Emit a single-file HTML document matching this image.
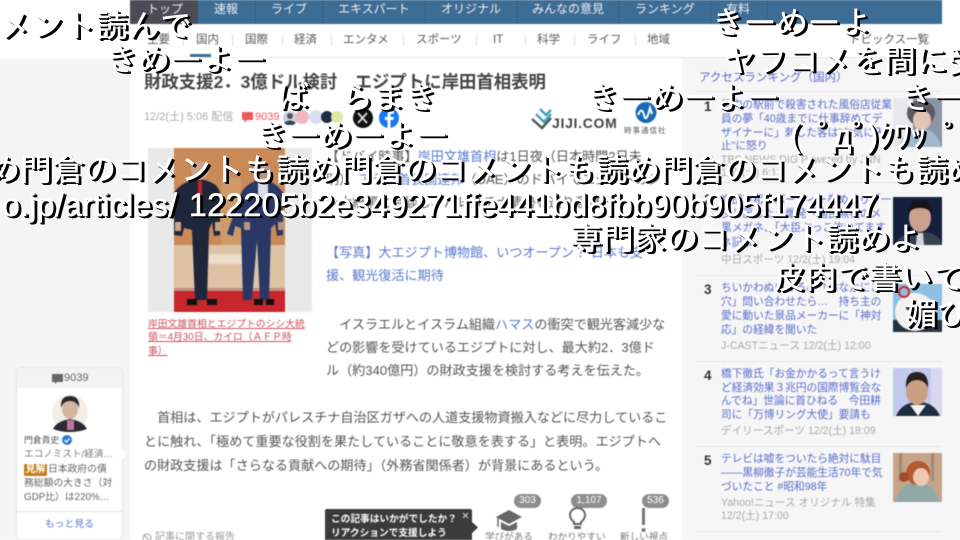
<!DOCTYPE html>
<html lang="ja"><head><meta charset="utf-8"><title>財政支援</title>
<style>
html,body{margin:0;padding:0;width:960px;height:540px;overflow:hidden;background:#fff}
#page{position:absolute;left:0;top:0;width:960px;height:540px;overflow:hidden;filter:blur(.45px);font-family:"Liberation Sans","Noto Sans CJK JP",sans-serif}
.b{position:absolute}
.t{position:absolute;white-space:nowrap;line-height:16px}
.nav{color:#eef2f6;font-size:12px;top:1px;line-height:16px}
.sub{color:#5a5a5a;font-size:11.5px;top:32px}
.sep{position:absolute;top:35px;width:1px;height:11px;background:#ddd}
.navsep{position:absolute;top:0;width:1px;height:24px;background:#35608a}
.a{font-size:13.1px;color:#555}
.lnk{font-size:13.1px;color:#5c78cf}
.r{font-size:10.7px;color:#5a6acb;left:721px}
.s{font-size:10.6px;color:#aaa;left:721px}
.n{font-size:13.5px;font-weight:bold;color:#333;left:704px}
.hr{position:absolute;left:696px;width:246px;height:1px;background:#e6e6e6}
#ov{position:absolute;left:0;top:0;width:960px;height:540px;overflow:hidden;filter:blur(.3px)}
.c{position:absolute;white-space:nowrap;color:#fff;font-size:32px;line-height:32px;font-family:"Liberation Sans","IPAGothic","Noto Sans CJK JP",sans-serif;-webkit-text-stroke:.5px #fff;text-shadow:2px 2px 0 #000,1px 1px 0 #000,3px 2px 0 #000}
</style></head><body>
<div id="page">
<div class="b" style="left:0;top:58px;width:130px;height:482px;background:#f5f5f5"></div>
<div class="b" style="left:682px;top:58px;width:278px;height:482px;background:#f6f6f6"></div>
<div class="b" style="left:130px;top:0;width:812px;height:24px;background:#3d6c94"></div>
<div class="b" style="left:130px;top:0;width:68px;height:24px;background:#4a4d55"></div>
<div class="b" style="left:130px;top:57px;width:812px;height:1px;background:#e8e8e8"></div>
<div class="navsep" style="left:255px"></div><div class="navsep" style="left:322px"></div><div class="navsep" style="left:425px"></div><div class="navsep" style="left:517px"></div><div class="navsep" style="left:618px"></div><div class="navsep" style="left:710px"></div><div class="navsep" style="left:767px"></div>
<span class="t nav" style="left:147px">トップ</span><span class="t nav" style="left:214px">速報</span><span class="t nav" style="left:271px">ライブ</span><span class="t nav" style="left:338px">エキスパート</span><span class="t nav" style="left:441px">オリジナル</span><span class="t nav" style="left:532px">みんなの意見</span><span class="t nav" style="left:635px">ランキング</span><span class="t nav" style="left:726px">有料</span>
<span class="t sub" style="left:147px">主要</span><span class="t sub" style="left:196px">国内</span><span class="t sub" style="left:245px">国際</span><span class="t sub" style="left:294px">経済</span><span class="t sub" style="left:343px">エンタメ</span><span class="t sub" style="left:416px">スポーツ</span><span class="t sub" style="left:493px">IT</span><span class="t sub" style="left:537px">科学</span><span class="t sub" style="left:587px">ライフ</span><span class="t sub" style="left:647px">地域</span><span class="t sub" style="left:849px">トピックス一覧</span>
<div class="sep" style="left:183px"></div><div class="sep" style="left:232px"></div><div class="sep" style="left:282px"></div><div class="sep" style="left:331px"></div><div class="sep" style="left:403px"></div><div class="sep" style="left:476px"></div><div class="sep" style="left:525px"></div><div class="sep" style="left:574px"></div><div class="sep" style="left:635px"></div>
<div class="b" style="left:190px;top:54px;width:21px;height:3px;background:#3d6c94"></div>

<span class="t" style="left:144px;top:73px;font-size:17.4px;font-weight:bold;color:#444;line-height:18px">財政支援2．3億ドル検討　エジプトに岸田首相表明</span>
<span class="t" style="left:144px;top:109px;font-size:11px;color:#aaa">12/2(土) 5:06 配信</span>
<svg class="b" style="left:242px;top:112px" width="12" height="13"><path d="M0 0h11v8H5l-2.500 3V8H0z" fill="#ef5a5e"/></svg>
<span class="t" style="left:255px;top:109px;font-size:11px;color:#ef5a5e">9039</span>
<svg class="b" style="left:282px;top:108px" width="118" height="22">
<circle cx="8" cy="10" r="7" fill="#c9d3e2"/><circle cx="8" cy="8" r="3" fill="#555"/><path d="M2 15q6-5 12 0l-3 2H5z" fill="#345"/>
<circle cx="20" cy="9" r="7" fill="#f0b7c0"/><circle cx="34" cy="9" r="7" fill="#d9dff2"/><circle cx="45" cy="9" r="6" fill="#1f2a44"/><circle cx="55" cy="9" r="6" fill="#dfe6a4"/>
<circle cx="81" cy="10" r="10" fill="#111"/><path d="M76 5l9 10M85 5l-9 10" stroke="#ddd" stroke-width="1.800"/>
<circle cx="107" cy="10" r="10" fill="#1877f2"/><path d="M108.500 20v-8h2.800l.5-3h-3.300V7.300c0-1 .4-1.600 1.700-1.600h1.700V3.100c-.6-.1-1.500-.2-2.400-.2-2.500 0-4 1.500-4 4.100V9h-2.700v3h2.700v8z" fill="#fff"/>
</svg>

<svg class="b" style="left:530px;top:100px" width="150" height="34">
<path d="M2 19l10 9 9-10" fill="none" stroke="#555" stroke-width="2.500"/><path d="M6 14l8 8 7-8M10 9l6 6 5-5" fill="none" stroke="#3fa3bd" stroke-width="2.500"/>
<circle cx="116" cy="12.500" r="10.500" fill="#1769b5"/><path d="M108 15q4-9 6 0t6-7l2 6" fill="none" stroke="#fff" stroke-width="2"/>
</svg>
<span class="t" style="left:552px;top:115px;font-size:14px;font-weight:bold;color:#444;letter-spacing:.7px">JIJI.COM</span>
<span class="t" style="left:624px;top:123px;font-size:7.500px;color:#555;letter-spacing:1px">時事通信社</span>

<div class="b" style="left:148px;top:148px;width:164px;height:164px;background:#e9e9e9"></div>
<svg class="b" style="left:174px;top:148px" width="111" height="164">
<rect width="111" height="164" fill="#dcc0a2"/><rect width="111" height="97" fill="#c98a58"/><rect x="47" y="30" width="20" height="67" fill="#cd9a68"/><rect y="97" width="111" height="43" fill="#ddc2a4"/><rect y="106" x="35" width="40" height="10" fill="#ecdcc8"/><rect y="140" width="111" height="3" fill="#c09080"/><rect y="143" width="111" height="21" fill="#c8252d"/>
<path d="M0 45q6-10 20-13h10q14 3 16 13v42l-6 1-2-14-3 8-2 70h-12l-3-70-8-2-2 8-8-1z" fill="#20263a"/><circle cx="26" cy="22" r="9" fill="#c9a38a"/><rect x="24" y="33" width="4" height="30" fill="#c8252d"/>
<path d="M67 45q5-9 17-13h8q12 4 17 13v42l-6 1-2-12-4 4-2 72h-9l-3-60-5 60h-9l-2-72-6-2-2 10-6-2z" fill="#2a3866"/><circle cx="88" cy="22" r="9" fill="#b99680"/><path d="M84 31h10v20h-10z" fill="#dcdce8"/>
<rect x="1" y="74" width="6" height="9" fill="#c9a38a"/><rect x="41" y="74" width="6" height="9" fill="#c9a38a"/><rect x="70" y="74" width="6" height="8" fill="#b99680"/><rect x="104" y="74" width="6" height="8" fill="#b99680"/>
<rect x="13" y="151" width="10" height="6" fill="#111"/><rect x="33" y="151" width="10" height="6" fill="#111"/><rect x="80" y="151" width="9" height="6" fill="#111"/><rect x="92" y="151" width="8" height="6" fill="#111"/>
</svg>
<span class="t" style="left:148px;top:317px;font-size:9.800px;color:#c9525e;text-decoration:underline">岸田文雄首相とエジプトのシシ大統</span>
<span class="t" style="left:148px;top:330px;font-size:9.800px;color:#c9525e;text-decoration:underline">領＝4月30日、カイロ（ＡＦＰ時</span>
<span class="t" style="left:148px;top:344px;font-size:9.800px;color:#c9525e;text-decoration:underline">事）</span>

<span class="t a" style="left:326px;top:149px">【ドバイ時事】<span style="color:#5c78cf">岸田文雄首相</span>は1日夜（日本時間2日未</span>
<span class="t a" style="left:326px;top:172px">明）、<span style="color:#5c78cf">アラブ首長国連邦</span>（UAE）のドバイでエジプトのシ</span>
<span class="t a" style="left:326px;top:195px">シ大統領と会談し、パレスチナ情勢を巡り意見</span>
<span class="t lnk" style="left:326px;top:245px">【写真】大エジプト博物館、いつオープン？ 日本も支</span>
<span class="t lnk" style="left:326px;top:268px">援、観光復活に期待</span>
<span class="t a" style="left:326px;top:317px">　イスラエルとイスラム組織<span style="color:#5c78cf">ハマス</span>の衝突で観光客減少な</span>
<span class="t a" style="left:326px;top:340px">どの影響を受けているエジプトに対し、最大約2．3億ド</span>
<span class="t a" style="left:326px;top:363px">ル（約340億円）の財政支援を検討する考えを伝えた。</span>
<span class="t a" style="left:144px;top:410px">　首相は、エジプトがパレスチナ自治区ガザへの人道支援物資搬入などに尽力しているこ</span>
<span class="t a" style="left:144px;top:434px">とに触れ、「極めて重要な役割を果たしていることに敬意を表する」と表明。エジプトへ</span>
<span class="t a" style="left:144px;top:458px">の財政支援は「さらなる貢献への期待」（外務省関係者）が背景にあるという。</span>

<div class="b" style="left:17px;top:368px;width:105px;height:171px;background:#fff;border-radius:4px;box-shadow:0 0 2px #ccc;overflow:hidden">
<div class="b" style="left:0;top:0;width:105px;height:20px;background:#f3f3f3"></div>
<div class="b" style="left:0;top:143px;width:105px;height:1px;background:#e6e6e6"></div>
<svg class="b" style="left:35px;top:5px" width="12" height="12"><path d="M0 1h11v8H5l-2 2V9H0z" fill="#666"/></svg>
<span class="t" style="left:47px;top:2px;font-size:11px;color:#666">9039</span>
<svg class="b" style="left:35px;top:27px" width="36" height="38"><circle cx="18" cy="18" r="18" fill="#f1efe6"/><path d="M1 34q4-8 17-10q13 2 17 10q-8 3-17 3t-17-3z" fill="#2a2a30"/><rect x="15" y="25" width="7" height="10" fill="#b878a8"/><ellipse cx="18" cy="14" rx="8" ry="10" fill="#d6b4a0"/><path d="M9 13q-1-12 9-12t9 12q-2-7-9-7t-9 7z" fill="#2a2a2a"/></svg>
<span class="t" style="left:7px;top:66px;font-size:8.800px;color:#555;line-height:13px">門倉貴史</span>
<svg class="b" style="left:44px;top:66px" width="12" height="12"><circle cx="6" cy="6" r="5" fill="#2f7ad6"/><path d="M3.500 6l2 2 3-3.500" fill="none" stroke="#fff" stroke-width="1.300"/></svg>
<span class="t" style="left:7px;top:80px;font-size:9.600px;color:#777;line-height:13px">エコノミスト/経済…</span>
<div class="b" style="left:7px;top:96px;width:23px;height:12px;background:#c27f16;border-radius:1px"></div>
<span class="t" style="left:8.500px;top:96px;font-size:10px;color:#fff;font-weight:bold;line-height:12px">見解</span>
<span class="t" style="left:31px;top:95px;font-size:9.800px;color:#666;line-height:14px">日本政府の債</span>
<span class="t" style="left:7px;top:109px;font-size:9.800px;color:#666;line-height:14px">務総額の大きさ（対</span>
<span class="t" style="left:7px;top:123px;font-size:9.800px;color:#666;line-height:14px">GDP比）は220%…</span>
<span class="t" style="left:0;width:105px;text-align:center;top:149px;font-size:9.900px;color:#5c78cf">もっと見る</span>
</div>
<svg class="b" style="left:122px;top:449px" width="6" height="11"><path d="M0 0l5 5.500-5 5.500z" fill="#fff"/></svg>

<div class="t" style="left:699px;top:71px;font-size:11.500px;color:#5a6acb;line-height:14px">アクセスランキング（国内）</div>
<div class="hr" style="top:91px"></div>
<span class="t n" style="top:99px">1</span>
<span class="t r" style="top:97px">都内の駅前で殺害された風俗店従業</span><span class="t r" style="top:111px">員の夢「40歳までに仕事辞めてデ</span><span class="t r" style="top:125px">ザイナーに」刺した客は"お気に入り</span><span class="t r" style="top:138px">止"に怒り</span>
<span class="t s" style="top:152px">TBS NEWS DIG Powered by JNN</span><span class="t s" style="top:165px">12/2(土) 6:12</span>
<div class="hr" style="top:182px"></div>
<span class="t n" style="top:192px">2</span>
<span class="t r" style="top:192px">岸田首相、パーティー券めぐり「一</span><span class="t r" style="top:206px">少し戻したら爆発「国民無視のメ</span><span class="t r" style="top:220px">黒メガネ、「大臣ぶっこ抜いてます</span><span class="t r" style="top:235px">ネ記事</span>
<span class="t s" style="top:252px">中日スポーツ 12/2(土) 19:04</span>
<div class="hr" style="top:275px"></div>
<span class="t n" style="top:282px">3</span>
<span class="t r" style="top:280px">ちいかわぬいぐるみ「おなかにここ</span><span class="t r" style="top:294px">穴」問い合わせたら…　持ち主の</span><span class="t r" style="top:308px">愛に動いた景品メーカーに「神対</span><span class="t r" style="top:322px">応」の経緯を聞いた</span>
<span class="t s" style="top:338px">J-CASTニュース 12/2(土) 12:00</span>
<div class="hr" style="top:361px"></div>
<span class="t n" style="top:368px">4</span>
<span class="t r" style="top:366px">橋下徹氏「お金かかるって言うけ</span><span class="t r" style="top:380px">ど経済効果３兆円の国際博覧会な</span><span class="t r" style="top:393px">んでね」世論に首ひねる　今田耕</span><span class="t r" style="top:407px">司に「万博リング大使」要請も</span>
<span class="t s" style="top:423px">デイリースポーツ 12/2(土) 18:09</span>
<div class="hr" style="top:446px"></div>
<span class="t n" style="top:453px">5</span>
<span class="t r" style="top:451px">テレビは嘘をついたら絶対に駄目</span><span class="t r" style="top:465px">――黒柳徹子が芸能生活70年で気</span><span class="t r" style="top:479px">づいたこと #昭和98年</span>
<span class="t s" style="top:495px">Yahoo!ニュース オリジナル 特集</span><span class="t s" style="top:508px">12/2(土) 17:00</span>
<div class="hr" style="top:531px"></div>

<svg class="b" style="left:893px;top:98px" width="49" height="49"><rect width="49" height="49" fill="#8a96a4"/><rect width="20" height="49" fill="#e8e8ea"/><ellipse cx="28" cy="15" rx="14" ry="13" fill="#5a5a60"/><ellipse cx="29" cy="22" rx="9" ry="10" fill="#e0c4b4"/><path d="M6 49q6-18 22-18t20 18z" fill="#9fb8d0"/></svg>
<svg class="b" style="left:893px;top:197px" width="49" height="48"><rect width="49" height="48" fill="#14203c"/><ellipse cx="27" cy="21" rx="11" ry="14" fill="#c9a18c"/><path d="M15 18q-1-15 12-15t12 15q-2-7-12-7t-12 7z" fill="#16161a"/><path d="M2 48q5-13 25-13t22 13z" fill="#35414f"/><path d="M24 36h6l1 12h-8z" fill="#cfd3da"/></svg>
<svg class="b" style="left:893px;top:284px" width="49" height="48"><rect width="49" height="48" fill="#8ebfe4"/><rect y="36" width="49" height="12" fill="#26323e"/><ellipse cx="22" cy="28" rx="20" ry="19" fill="#f2f2f0"/><circle cx="11" cy="8" r="5" fill="none" stroke="#d8232a" stroke-width="2"/><circle cx="15" cy="24" r="2" fill="#333"/></svg>
<svg class="b" style="left:893px;top:368px" width="49" height="48"><rect width="49" height="48" fill="#c3c8ee"/><rect x="38" width="11" height="48" fill="#d8d8ee"/><path d="M3 48q6-14 22-14t22 14z" fill="#1f2d40"/><path d="M17 37l8 11 8-11z" fill="#f2f2f2"/><ellipse cx="24" cy="23" rx="11" ry="14" fill="#c99f82"/><path d="M13 20q-1-16 11-16t11 16q-3-8-11-8t-11 8z" fill="#26221e"/></svg>
<svg class="b" style="left:893px;top:453px" width="49" height="49"><rect width="49" height="49" fill="#c5a48a"/><rect x="6" width="3" height="28" fill="#a68872"/><rect x="38" width="3" height="28" fill="#a68872"/><path d="M2 49q6-20 22-20t23 20z" fill="#8fa8a6"/><circle cx="25" cy="20" r="12" fill="#b25a2e"/><ellipse cx="28" cy="24" rx="8" ry="9" fill="#ecc8b4"/><circle cx="11" cy="24" r="5" fill="#9c4e28"/></svg>

<svg class="b" style="left:142px;top:533px" width="10" height="10"><circle cx="5" cy="5" r="4" fill="none" stroke="#999"/><path d="M2 2l6 6" stroke="#999"/></svg>
<span class="t" style="left:155px;top:530px;font-size:10px;color:#999">記事に関する報告</span>

<div class="b" style="left:325px;top:509px;width:147px;height:31px;background:#3b3b3b;border-radius:2px 2px 0 0"></div>
<svg class="b" style="left:472px;top:522px" width="7" height="11"><path d="M0 0l6 5.500-6 5.500z" fill="#3b3b3b"/></svg>
<span class="t" style="left:331px;top:513px;font-size:9.700px;font-weight:bold;color:#fff;line-height:14px">この記事はいかがでしたか？</span>
<span class="t" style="left:331px;top:527px;font-size:9.700px;font-weight:bold;color:#fff;line-height:14px">リアクションで支援しよう</span>
<svg class="b" style="left:462px;top:512px" width="7" height="7"><path d="M1 1l5 5M6 1l-5 5" stroke="#ddd" stroke-width="1"/></svg>

<div class="b" style="left:514px;top:494px;width:27px;height:14px;background:#8e8e8e;border-radius:7px"></div><span class="t" style="left:514px;width:27px;text-align:center;top:493px;font-size:10px;color:#fff">303</span>
<div class="b" style="left:571px;top:494px;width:36px;height:14px;background:#8e8e8e;border-radius:7px"></div><span class="t" style="left:571px;width:36px;text-align:center;top:493px;font-size:10px;color:#fff">1,107</span>
<div class="b" style="left:642px;top:494px;width:27px;height:14px;background:#8e8e8e;border-radius:7px"></div><span class="t" style="left:642px;width:27px;text-align:center;top:493px;font-size:10px;color:#fff">536</span>
<svg class="b" style="left:496px;top:508px" width="27" height="24"><path d="M13 2L0 9l13 7 13-7z" fill="#666"/><path d="M5 14v7q8 4 16 0v-7l-8 4z" fill="#666"/><path d="M2 10v9" stroke="#666" stroke-width="1.500"/></svg>
<svg class="b" style="left:568px;top:507px" width="20" height="24"><path d="M6 15q-4-3-4-7a7.500 7 0 0 1 15 0q0 4-4 7v2H6z" fill="none" stroke="#666" stroke-width="2"/><rect x="6" y="19" width="7" height="3" rx="1" fill="#666"/></svg>
<svg class="b" style="left:640px;top:507px" width="8" height="26"><rect x="2" y="1" width="3" height="17" fill="#777"/><circle cx="3.500" cy="23" r="2" fill="#777"/></svg>
<span class="t" style="left:485px;top:530px;font-size:9.600px;color:#777">学びがある</span>
<span class="t" style="left:548px;top:530px;font-size:9.600px;color:#777">わかりやすい</span>
<span class="t" style="left:620px;top:530px;font-size:9.600px;color:#777">新しい視点</span>
</div>

<div id="ov">
<span class="c" style="left:-32px;top:10px">コメント読んで</span>
<span class="c" style="left:106px;top:44px">きめーよー</span>
<span class="c" style="left:277px;top:82px">ば　らまき</span>
<span class="c" style="left:256px;top:120px">きーめーよー</span>
<span class="c" style="left:712px;top:7px">きーめーよ</span>
<span class="c" style="left:724px;top:45px">ヤフコメを間に受</span>
<span class="c" style="left:587px;top:82px">きーめーよー</span>
<span class="c" style="left:901px;top:82px">きー</span>
<span class="c" style="left:790px;top:120px">( ﾟдﾟ)ｸﾜｯ  ﾟ</span>
<span class="c" style="left:-12px;top:154px">め門倉のコメントも読め門倉のコメントも読め門倉のコメントも読め</span>
<span class="c" style="left:2px;top:189px;letter-spacing:.33px">o.jp/articles<span style="letter-spacing:12px">/</span>122205b2e349271ffe441bd8fbb90b905f174447</span>
<span class="c" style="left:570px;top:223px">専門家のコメント読めよ</span>
<span class="c" style="left:773px;top:262px">皮肉で書いて</span>
<span class="c" style="left:905px;top:298px">媚び</span>
</div>
</body></html>
